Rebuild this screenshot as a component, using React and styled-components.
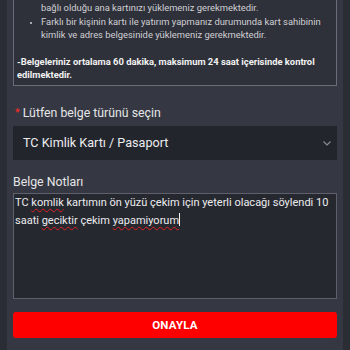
import React from "react";
import styled, { createGlobalStyle } from "styled-components";

const Global = createGlobalStyle`
  html, body { margin: 0; padding: 0; background: #2b2d35; overflow: hidden; }
  body { font-family: Roboto, "Liberation Sans", Arial, sans-serif; }
  * { box-sizing: border-box; }
`;

const Panel = styled.div`
  margin: 0 7px;
  width: 336px;
  height: 350px;
  background: #353842;
  padding: 0 6px;
  display: flex;
  flex-direction: column;
`;

const InfoBox = styled.div`
  margin-top: -12px;
  border: 1px solid #6a6d77;
  background: #2f313a;
  padding: 12px 4px 3px 3px;
  color: #cfd0d4;
  font-size: 9.4px;
  line-height: 13.6px;
`;

const List = styled.ul`
  margin: 0;
  padding-left: 24px;
  list-style: disc;
`;

const Item = styled.li`
  list-style: ${(p) => (p.$cont ? "none" : "disc")};
  &::marker { font-size: 8px; }
`;

const Bold = styled.p`
  margin: 13px 0 0;
  font-weight: 700;
  color: #f2f2f2;
`;

const Label = styled.label`
  display: flex;
  align-items: center;
  margin-top: ${(p) => p.$top}px;
  font-size: 12.3px;
  line-height: 14px;
  color: #e6e6e8;
`;

const Star = styled.span`
  color: #ff2a2a;
  margin: 0 3px 0 2px;
  font-size: 11px;
`;

const Select = styled.div`
  margin-top: 6px;
  height: 34px;
  background: #23252d;
  display: flex;
  align-items: center;
  justify-content: space-between;
  padding: 0 5px 0 10px;
  color: #ececee;
  font-size: 12.6px;
`;

const TextArea = styled.div`
  margin-top: 4px;
  height: 106px;
  border: 1px solid #5e616c;
  background: #262830;
  padding: 0 2px 0 1px;
  color: #ececee;
  font-size: 11px;
  line-height: 18px;
`;

const Typo = styled.span`
  text-decoration: underline wavy #e02020;
  text-decoration-thickness: 1px;
  text-underline-offset: 2px;
`;

const Caret = styled.span`
  display: inline-block;
  width: 1px;
  height: 13px;
  background: #f0f0f0;
  vertical-align: -2px;
`;

const Button = styled.button`
  margin-top: 13px;
  height: 26px;
  border: none;
  border-radius: 3px;
  background: #ff0000;
  color: #fff;
  font-family: inherit;
  font-weight: 700;
  font-size: 11.5px;
  letter-spacing: 0.2px;
`;

export default function App() {
  return (
    <>
      <Global />
      <Panel>
        <InfoBox>
          <List>
            <Item $cont>bağlı olduğu ana kartınızı yüklemeniz gerekmektedir.</Item>
            <Item>
              Farklı bir kişinin kartı ile yatırım yapmanız durumunda kart sahibinin kimlik ve adres
              belgesinide yüklemeniz gerekmektedir.
            </Item>
          </List>
          <Bold>
            -Belgeleriniz ortalama 60 dakika, maksimum 24 saat içerisinde kontrol edilmektedir.
          </Bold>
        </InfoBox>
        <Label $top={20}>
          <Star>*</Star>Lütfen belge türünü seçin
        </Label>
        <Select>
          <span>TC Kimlik Kartı / Pasaport</span>
          <svg width="10" height="10" viewBox="0 0 10 10">
            <path d="M1.5 3.5 L5 7 L8.5 3.5" fill="none" stroke="#8a8c94" strokeWidth="1.2" />
          </svg>
        </Select>
        <Label $top={15}>Belge Notları</Label>
        <TextArea>
          TC <Typo>komlik</Typo> kartımın ön yüzü çekim için yeterli olacağı söylendi 10 saati{" "}
          <Typo>geciktir</Typo> çekim <Typo>yapamiyorum</Typo>
          <Caret />
        </TextArea>
        <Button>ONAYLA</Button>
      </Panel>
    </>
  );
}
